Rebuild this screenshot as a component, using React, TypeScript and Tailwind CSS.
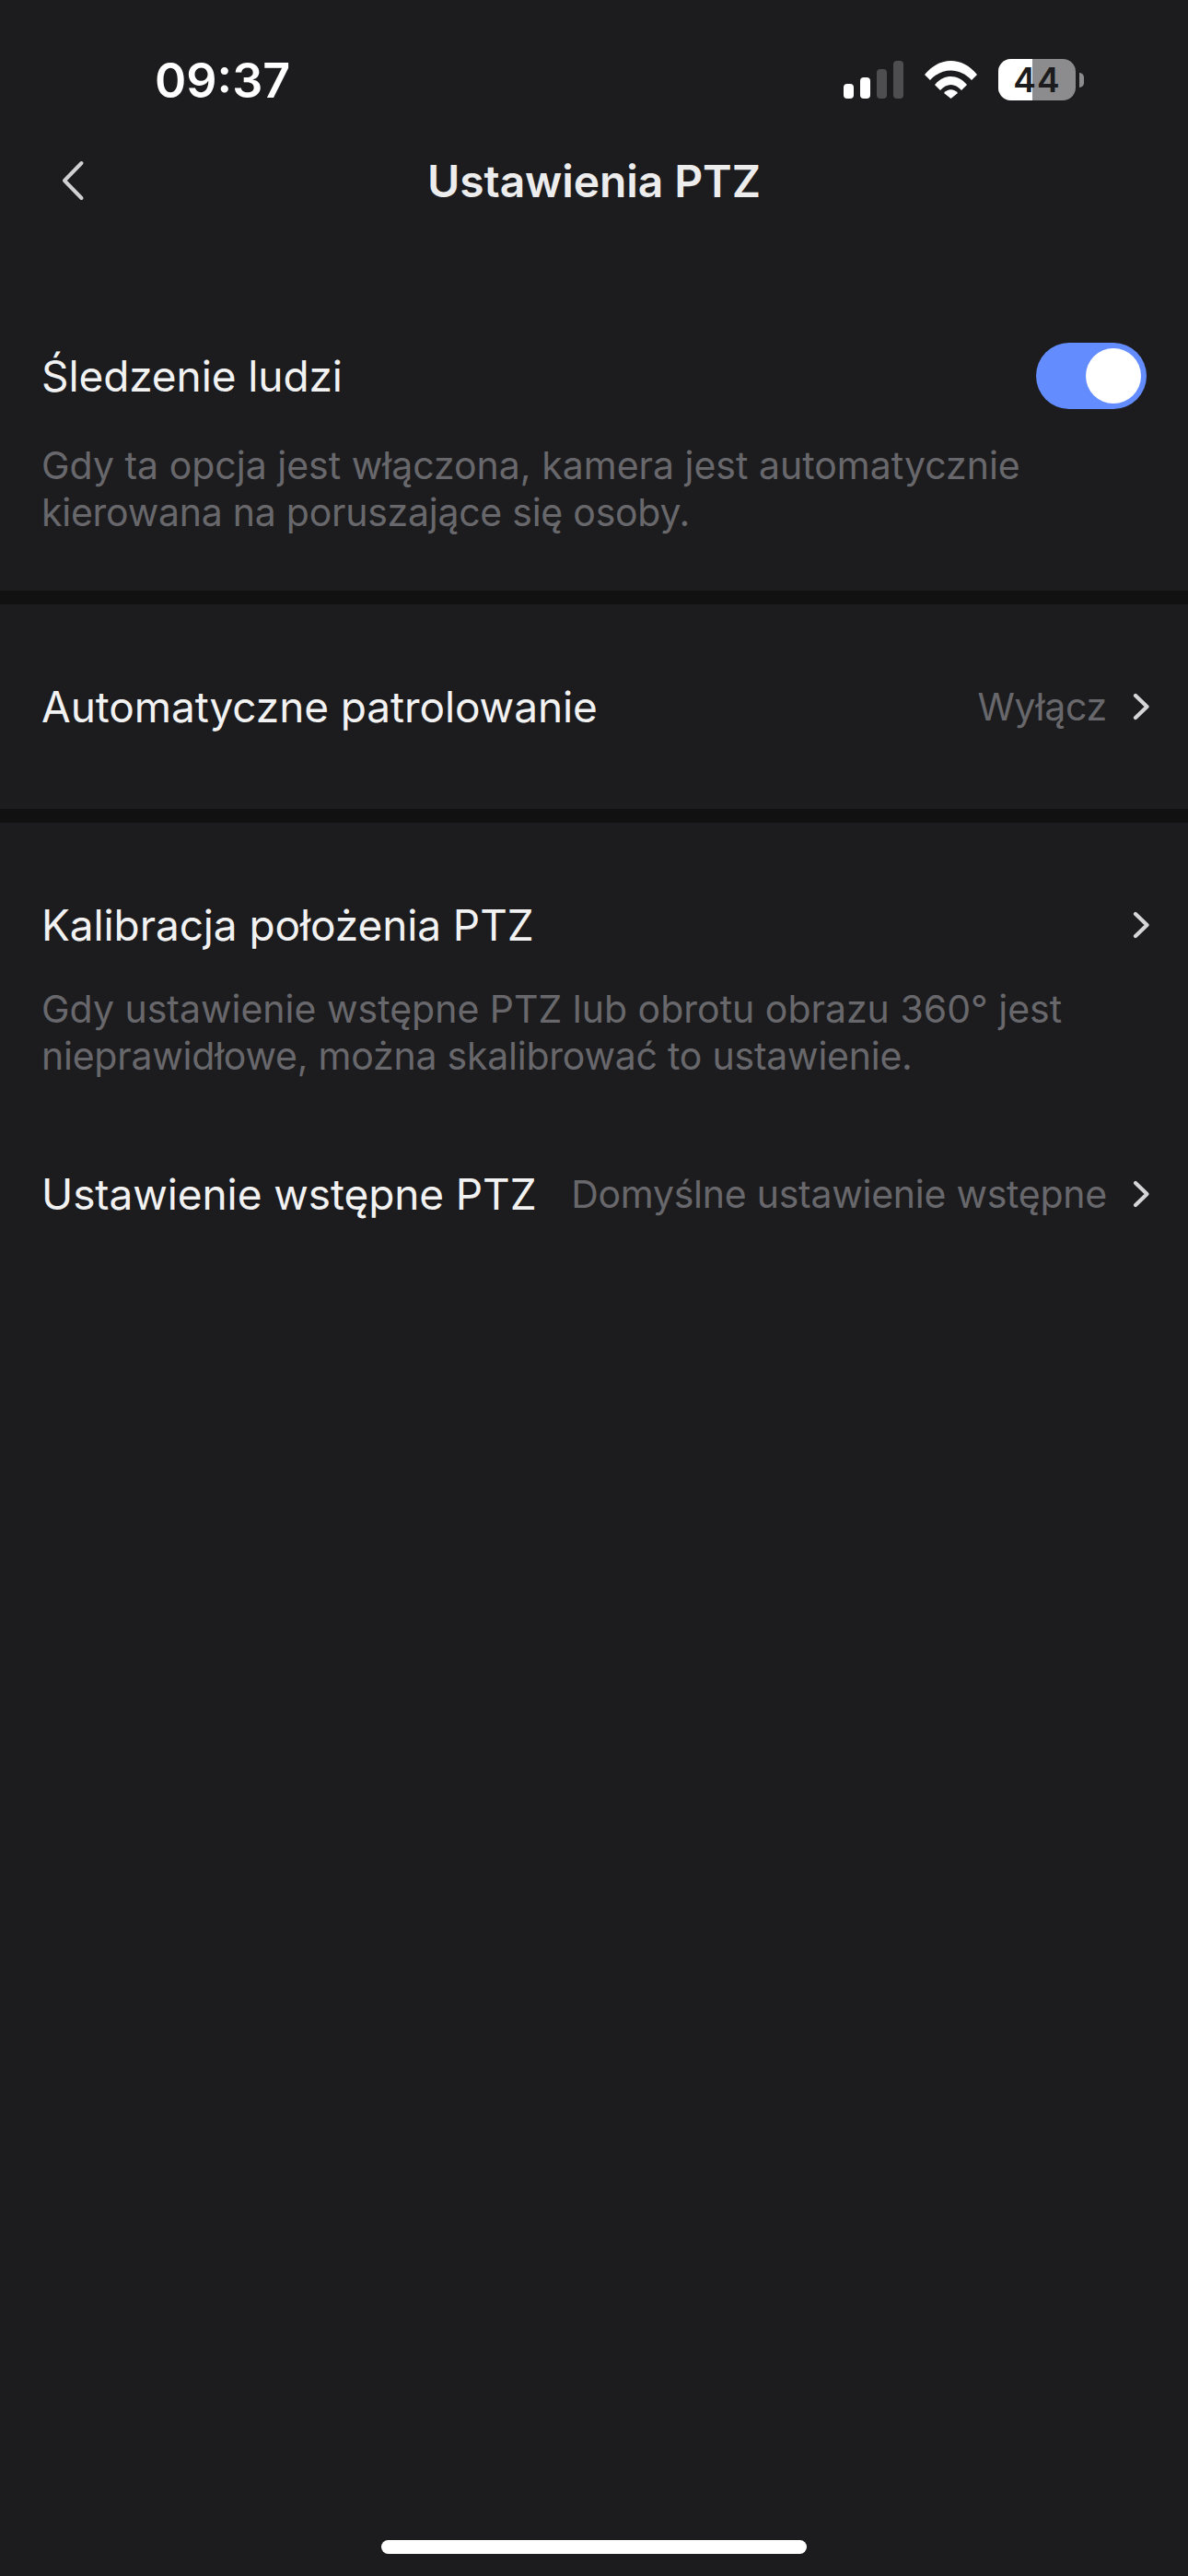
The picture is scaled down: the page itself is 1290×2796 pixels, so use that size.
const Chevron = () => (
  <svg width="19" height="30" viewBox="0 0 19 30" fill="none" className="shrink-0">
    <path d="M3 3 L15.5 15 L3 27" stroke="#d6d6d8" strokeWidth="4.2" strokeLinecap="round" strokeLinejoin="round" />
  </svg>
);

const Row = ({ label, value, className }: { label: string; value?: string; className: string }) => (
  <div className={`flex items-center justify-between ${className}`}>
    <span className="text-[46px] leading-[60px] tracking-[-0.1px] text-[#f2f2f3] whitespace-nowrap">{label}</span>
    <div className="flex items-center gap-[28px]">
      {value && <span className="text-[41px] leading-[60px] tracking-[-0.25px] text-[#68686c] whitespace-nowrap">{value}</span>}
      <Chevron />
    </div>
  </div>
);

const Desc = ({ children, className }: { children: React.ReactNode; className: string }) => (
  <p className={`text-[41px] leading-[51px] text-[#68686c] ${className}`}>{children}</p>
);

export default function App() {
  return (
    <div className="w-[1290px] h-[2796px] bg-[#1c1c1e] flex flex-col overflow-hidden font-['Inter','Liberation_Sans',sans-serif]">
      <div className="h-[130px] shrink-0 flex items-start justify-between pl-[168px] pr-[113px] pt-[56px]">
        <span className="text-[52px] leading-[63px] font-semibold text-white">09:37</span>
        <div className="flex items-center gap-[23px] pt-[8px]">
          <svg width="65" height="41" viewBox="0 0 65 41">
            <rect x="0" y="25" width="11" height="16" rx="4" fill="#fff" />
            <rect x="18" y="18" width="11" height="23" rx="4" fill="#fff" />
            <rect x="36" y="9" width="11" height="32" rx="4" fill="#4e4e50" />
            <rect x="54" y="0" width="11" height="41" rx="4" fill="#4e4e50" />
          </svg>
          <svg width="57" height="41" viewBox="0 0 57 41">
            <path d="M0 15 C16 -5 41 -5 57 15 L51 21 C38 7 19 7 6 21 Z" fill="#fff" />
            <path d="M11 26 C21 14 36 14 46 26 L40 32 C33 24 24 24 17 32 Z" fill="#fff" />
            <path d="M21 35 C25 30 32 30 36 35 L28.5 41 Z" fill="#fff" />
          </svg>
          <div className="flex items-center gap-[4px]">
            <div className="relative w-[84px] h-[45px] rounded-[14px] overflow-hidden bg-[#8c8c8e] flex items-center justify-center">
              <div className="absolute left-0 top-0 bottom-0 w-[37px] bg-white" />
              <span className="relative text-[37px] leading-[45px] font-semibold text-[#1c1c1e] tracking-[1px]">44</span>
            </div>
            <div className="w-[5px] h-[16px] rounded-r-[5px] bg-[#8c8c8e]" />
          </div>
        </div>
      </div>

      <div className="relative h-[134px] shrink-0 flex items-center justify-center">
        <svg width="26" height="44" viewBox="0 0 26 44" fill="none" className="absolute left-[66px] top-[44px]">
          <path d="M22.5 3 L4 22 L22.5 41" stroke="#d0d0d2" strokeWidth="4" strokeLinecap="round" strokeLinejoin="round" />
        </svg>
        <span className="text-[48px] leading-[60px] font-semibold tracking-[-0.1px] text-[#ededee]">Ustawienia PTZ</span>
      </div>

      <div className="h-[377px] shrink-0 px-[45px] pt-[108px]">
        <div className="flex items-center justify-between h-[72px]">
          <span className="text-[46px] leading-[60px] tracking-[-0.1px] text-[#f2f2f3]">Śledzenie ludzi</span>
          <div className="relative w-[120px] h-[72px] rounded-full bg-[#638cff]">
            <div className="absolute right-[6px] top-[6px] w-[60px] h-[60px] rounded-full bg-white" />
          </div>
        </div>
        <Desc className="mt-[36px] w-[1198px]">
          Gdy ta opcja jest włączona, kamera jest automatycznie
          <br />
          <span className="tracking-[-0.25px]">kierowana na poruszające się osoby.</span>
        </Desc>
      </div>
      <div className="h-[15px] shrink-0 bg-[#111112]" />

      <Row label="Automatyczne patrolowanie" value="Wyłącz" className="h-[222px] shrink-0 pl-[45px] pr-[41px]" />
      <div className="h-[15px] shrink-0 bg-[#111112]" />

      <Row label="Kalibracja położenia PTZ" className="h-[60px] mt-[81px] shrink-0 pl-[45px] pr-[41px]" />
      <Desc className="mt-[36px] px-[45px]">
        Gdy ustawienie wstępne PTZ lub obrotu obrazu 360° jest
        <br />
        <span className="tracking-[-0.23px]">nieprawidłowe, można skalibrować to ustawienie.</span>
      </Desc>
      <Row label="Ustawienie wstępne PTZ" value="Domyślne ustawienie wstępne" className="h-[60px] mt-[94px] shrink-0 pl-[45px] pr-[41px]" />

      <div className="flex-1" />
      <div className="h-[39px] shrink-0 flex justify-center">
        <div className="w-[462px] h-[15px] rounded-full bg-white" />
      </div>
    </div>
  );
}
